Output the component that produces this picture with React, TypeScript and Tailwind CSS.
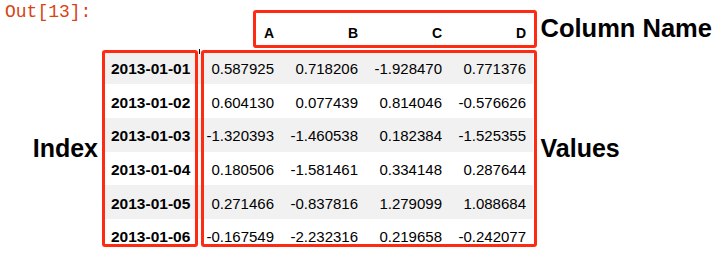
const columns = ['A', 'B', 'C', 'D'];

const rows = [
  ['2013-01-01', '0.587925', '0.718206', '-1.928470', '0.771376'],
  ['2013-01-02', '0.604130', '0.077439', '0.814046', '-0.576626'],
  ['2013-01-03', '-1.320393', '-1.460538', '0.182384', '-1.525355'],
  ['2013-01-04', '0.180506', '-1.581461', '0.334148', '0.287644'],
  ['2013-01-05', '0.271466', '-0.837816', '1.279099', '1.088684'],
  ['2013-01-06', '-0.167549', '-2.232316', '0.219658', '-0.242077'],
];

const widths = ['w-[82px]', 'w-[84px]', 'w-[84px]', 'w-[84px]'];

export default function App() {
  return (
    <div className="relative w-[728px] h-[266px] overflow-hidden bg-white text-black font-['Liberation_Sans',Arial,sans-serif]">
      <div className="flex items-start">
        {/* Prompt + Index label */}
        <div className="w-[102px] shrink-0 pt-[2px]">
          <div className="pl-[5px] text-[18px] leading-[20px] text-[#d84315] font-['Liberation_Mono',monospace]">
            Out[13]:
          </div>
          <div className="mt-[111px] pr-[4px] text-right text-[25px] leading-[30px] font-bold">
            Index
          </div>
        </div>

        {/* DataFrame */}
        <div className="shrink-0 pt-[14px]">
          <div className="flex h-[36.6px] pt-[10px] text-[14px] leading-[18px] font-bold">
            <div className="w-[97px]" />
            {columns.map((c, i) => (
              <div key={c} className={`${widths[i]} pr-[7px] text-right`}>
                {c}
              </div>
            ))}
          </div>
          {rows.map((r, ri) => (
            <div
              key={r[0]}
              className={`flex h-[33.67px] pt-[9.5px] text-[15px] leading-[18px] ${ri % 2 === 0 ? 'bg-[#f1f1f1]' : 'bg-white'}`}
            >
              <div className="w-[97px] pl-[9px] text-[15.5px] font-bold">{r[0]}</div>
              {r.slice(1).map((v, i) => (
                <div key={i} className={`${widths[i]} pr-[7px] text-right`}>
                  {v}
                </div>
              ))}
            </div>
          ))}
        </div>

        {/* Right labels */}
        <div className="ml-[7.5px] pt-[13px] text-[25.5px] leading-[30px] font-bold whitespace-nowrap">
          <div>Column Name</div>
          <div className="mt-[90px] text-[25px]">Values</div>
        </div>
      </div>

      {/* annotation boxes */}
      <div className="absolute left-[198.5px] top-[49px] w-[1.5px] h-[5px] bg-black" />
      <div className="absolute left-[252.7px] top-[9.7px] w-[284.6px] h-[38px] border-[3px] border-[#ff2a12] rounded-[3px]" />
      <div className="absolute left-[101.5px] top-[49.5px] w-[96px] h-[197px] border-[3px] border-[#ff2a12] rounded-[3px]" />
      <div className="absolute left-[201px] top-[49.5px] w-[336px] h-[197px] border-[3px] border-[#ff2a12] rounded-[3px]" />
    </div>
  );
}
